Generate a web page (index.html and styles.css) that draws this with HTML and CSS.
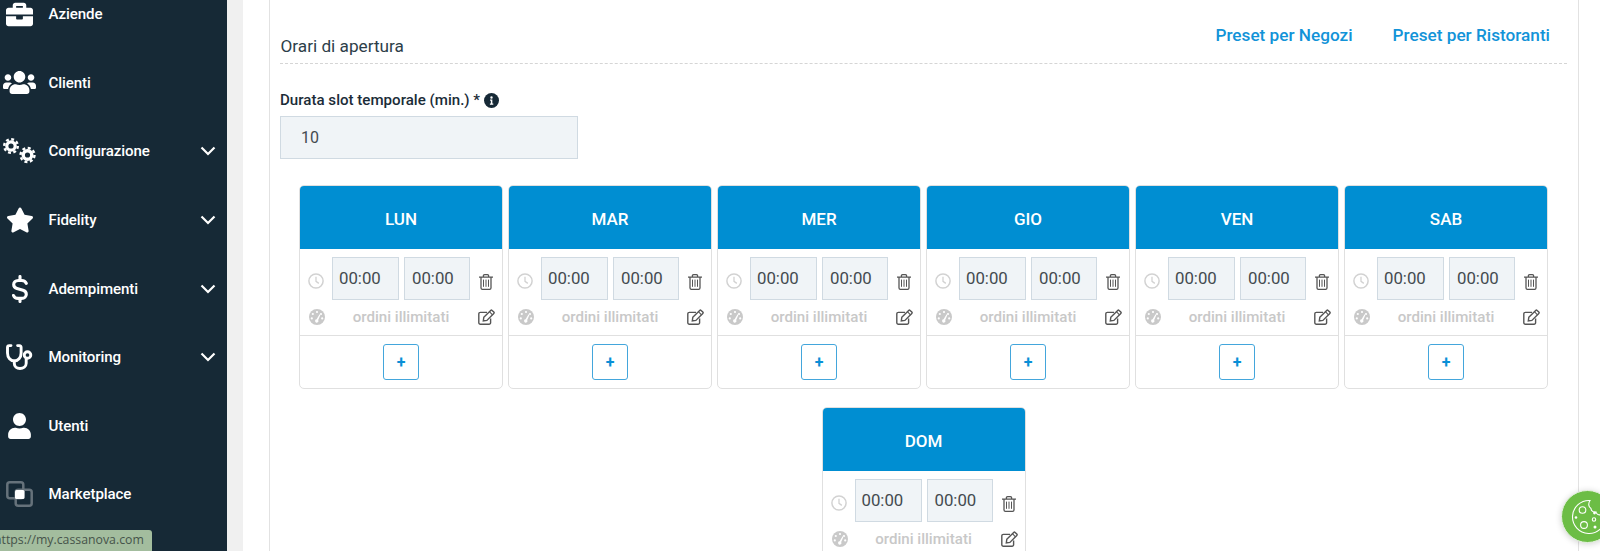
FILE: index.html
```html
<!DOCTYPE html>
<html lang="it">
<head>
<meta charset="utf-8">
<title>Orari di apertura</title>
<link rel="stylesheet" href="styles.css">
</head>
<body>
<svg class="defs" width="0" height="0" aria-hidden="true">
  <defs>
    <symbol id="i-clock" viewBox="0 0 16 16"><circle cx="8" cy="8" r="7.100" fill="none" stroke="currentColor" stroke-width="1.500"/><path d="M8 3.800V8.400l2.800 2" fill="none" stroke="currentColor" stroke-width="1.300"/></symbol>
    <symbol id="i-gauge" viewBox="0 0 16 16"><circle cx="8" cy="8" r="8" fill="currentColor"/><g fill="#fff"><circle cx="8" cy="3" r="1.100"/><circle cx="3.800" cy="5" r="1.100"/><circle cx="2.800" cy="9.400" r="1.100"/><circle cx="13.200" cy="9.400" r="1.100"/><circle cx="12" cy="5" r="1.100"/><path d="M10.600 5.200l.9.500-2.300 5.300a1.700 1.700 0 1 1-1.600-.8z"/></g></symbol>
    <symbol id="i-trash" viewBox="0 0 14 16"><g fill="none" stroke="currentColor" stroke-width="1.300"><path d="M0 3.200h14M2 3.200V14a1.400 1.400 0 0 0 1.400 1.300h7.200A1.400 1.400 0 0 0 12 14V3.200"/><path d="M4.400 3V1.800Q4.400.7 5.500.7h3Q9.600.7 9.600 1.800V3"/></g><path d="M4.500 5.600v7.200M7 5.600v7.200M9.500 5.600v7.200" stroke="currentColor" stroke-width="1"/></symbol>
    <symbol id="i-edit" viewBox="0 0 17 16"><g fill="none" stroke="currentColor" stroke-width="1.400"><path d="M12.600 9.600v4a1.600 1.600 0 0 1-1.600 1.700H2.400A1.600 1.600 0 0 1 .8 13.600V5a1.600 1.600 0 0 1 1.600-1.600H9"/><path d="M5.800 8.300 12.700 1.400a1 1 0 0 1 1.400 0l1.700 1.700a1 1 0 0 1 0 1.400L8.900 11.400l-3.600.5z"/><path d="M11.400 2.700l3.100 3.100" stroke-width="1.100"/></g></symbol>
    <symbol id="i-chevron" viewBox="0 0 16 10"><path d="M1.500 1.500 8 8l6.500-6.500" fill="none" stroke="currentColor" stroke-width="2.200"/></symbol>
  </defs>
</svg>

<aside class="sidebar">
  <nav class="nav">
    <a class="nav-item"><span class="nav-icon"><svg width="27" height="27" viewBox="0 0 512 512"><path fill="currentColor" d="M320 336c0 8.840-7.160 16-16 16h-96c-8.840 0-16-7.160-16-16v-48H0v144c0 25.600 22.400 48 48 48h416c25.600 0 48-22.400 48-48V288H320v48zm144-208h-80V80c0-25.600-22.400-48-48-48H176c-25.600 0-48 22.400-48 48v48H48c-25.600 0-48 22.400-48 48v80h512v-80c0-25.600-22.400-48-48-48zm-144 0H192V96h128v32z"/></svg></span><span class="nav-label">Aziende</span></a>
    <a class="nav-item"><span class="nav-icon"><svg width="33" height="27" viewBox="0 0 640 512"><path fill="currentColor" d="M96 224c35.300 0 64-28.700 64-64s-28.700-64-64-64-64 28.700-64 64 28.700 64 64 64zm448 0c35.300 0 64-28.700 64-64s-28.700-64-64-64-64 28.700-64 64 28.700 64 64 64zm32 32h-64c-17.600 0-33.500 7.100-45.100 18.600 40.300 22.100 68.900 62 75.100 109.400h66c17.700 0 32-14.300 32-32v-32c0-35.300-28.700-64-64-64zm-256 0c61.900 0 112-50.100 112-112S381.900 32 320 32 208 82.100 208 144s50.100 112 112 112zm76.800 32h-8.300c-20.800 10-43.900 16-68.500 16s-47.600-6-68.500-16h-8.300C179.600 288 128 339.600 128 403.200V432c0 26.500 21.500 48 48 48h288c26.500 0 48-21.500 48-48v-28.800c0-63.600-51.600-115.200-115.200-115.200zm-223.700-13.400C161.500 263.100 145.600 256 128 256H64c-35.300 0-64 28.700-64 64v32c0 17.700 14.300 32 32 32h65.900c6.300-47.400 34.900-87.300 75.200-109.400z"/></svg></span><span class="nav-label">Clienti</span></a>
    <a class="nav-item"><span class="nav-icon"><svg width="33" height="26" viewBox="0 0 33 26"><g fill="none" stroke="currentColor"><circle cx="8" cy="8" r="6.800" stroke-width="2.400" stroke-dasharray="2.900 2.440"/><circle cx="8" cy="8" r="4.200" stroke-width="3.200"/><circle cx="24.500" cy="17" r="7" stroke-width="2.400" stroke-dasharray="3 2.500"/><circle cx="24.500" cy="17" r="4.300" stroke-width="3.400"/></g></svg></span><span class="nav-label">Configurazione</span><svg class="nav-chevron"><use href="#i-chevron"/></svg></a>
    <a class="nav-item"><span class="nav-icon"><svg width="28" height="26" viewBox="0 0 576 512"><path fill="currentColor" d="M259.300 17.800L194 150.200 47.900 171.500c-26.200 3.800-36.700 36.100-17.700 54.600l105.700 103-25 145.500c-4.500 26.300 23.200 46 46.400 33.700L288 439.600l130.700 68.700c23.200 12.200 50.900-7.400 46.400-33.700l-25-145.500 105.700-103c19-18.500 8.500-50.800-17.700-54.600L382 150.200 316.700 17.800c-11.700-23.600-45.600-23.900-57.400 0z"/></svg></span><span class="nav-label">Fidelity</span><svg class="nav-chevron"><use href="#i-chevron"/></svg></a>
    <a class="nav-item"><span class="nav-icon"><svg width="16" height="28" viewBox="0 0 16 28"><path d="M14.300 8.400C13.600 6.600 12 5.500 9.800 5.500H6.200C3.500 5.500 1.700 7.300 1.700 9.600c0 2 1.300 3.400 3.300 4l6 1.700c2 .6 3.300 2 3.300 4 0 2.300-1.800 4.100-4.500 4.100H6C3.800 23.400 2.200 22.300 1.500 20.500M8 1.500v4M8 23.400v3.100" fill="none" stroke="currentColor" stroke-width="3.100" stroke-linecap="round"/></svg></span><span class="nav-label">Adempimenti</span><svg class="nav-chevron"><use href="#i-chevron"/></svg></a>
    <a class="nav-item"><span class="nav-icon"><svg width="28" height="26" viewBox="0 0 28 26"><g fill="none" stroke="currentColor" stroke-width="2.900" stroke-linecap="round"><path d="M5 1.600H3.200C2 1.600 1.500 2.300 1.500 3.500V9c0 4.600 3.100 7.900 6.800 7.900s6.800-3.300 6.800-7.900V3.500c0-1.200-.5-1.900-1.700-1.900h-1.800"/><path d="M8.300 17v2.500c0 3.300 2.500 5 5.700 5s6.200-2 6.200-5.200v-4.300"/><circle cx="21.500" cy="11" r="3.300"/></g></svg></span><span class="nav-label">Monitoring</span><svg class="nav-chevron"><use href="#i-chevron"/></svg></a>
    <a class="nav-item"><span class="nav-icon"><svg width="23" height="26" viewBox="0 0 448 512"><path fill="currentColor" d="M224 256c70.700 0 128-57.300 128-128S294.700 0 224 0 96 57.300 96 128s57.300 128 128 128zm89.600 32h-16.700c-22.200 10.200-46.900 16-72.900 16s-50.600-5.800-72.900-16h-16.700C60.200 288 0 348.200 0 422.400V464c0 26.500 21.500 48 48 48h352c26.500 0 48-21.500 48-48v-41.600c0-74.200-60.200-134.400-134.400-134.400z"/></svg></span><span class="nav-label">Utenti</span></a>
    <a class="nav-item"><span class="nav-icon"><svg width="27" height="26" viewBox="0 0 27 26"><g fill="none" stroke="#66727b" stroke-width="2.500"><rect x="1.300" y="1.300" width="16" height="16" rx="2.500"/><rect x="9.700" y="8.700" width="16" height="16" rx="2.500"/></g><rect x="9" y="9" width="9.500" height="9" rx="1.500" fill="#fff"/></svg></span><span class="nav-label">Marketplace</span></a>
  </nav>
</aside>

<main class="main">
  <div class="page">
    <section class="panel">
      <header class="section-head">
        <h2 class="section-title">Orari di apertura</h2>
        <div class="presets">
          <a class="preset">Preset per Negozi</a>
          <a class="preset">Preset per Ristoranti</a>
        </div>
      </header>

      <div class="field">
        <div class="field-label">Durata slot temporale (min.) *
          <svg class="info" viewBox="0 0 16 16"><circle cx="8" cy="8" r="8" fill="#162936"/><path d="M6.500 7h2.400v4.200h1V12.500H6.300v-1.300h1V8.200h-.8zM8 3.400a1.300 1.300 0 1 1 0 2.600 1.300 1.300 0 0 1 0-2.600z" fill="#fff"/></svg>
        </div>
        <div class="input slot-input">10</div>
      </div>

      <div class="days">
        <article class="day">
          <h3 class="day-head">LUN</h3>
          <div class="day-body">
            <div class="slot-row"><svg class="ico-left"><use href="#i-clock"/></svg><div class="input time">00:00</div><div class="input time">00:00</div><svg class="ico-trash"><use href="#i-trash"/></svg></div>
            <div class="limit-row"><svg class="ico-left gauge"><use href="#i-gauge"/></svg><span class="limit">ordini illimitati</span><svg class="ico-edit"><use href="#i-edit"/></svg></div>
          </div>
          <div class="day-foot"><button class="add">+</button></div>
        </article>
        <article class="day">
          <h3 class="day-head">MAR</h3>
          <div class="day-body">
            <div class="slot-row"><svg class="ico-left"><use href="#i-clock"/></svg><div class="input time">00:00</div><div class="input time">00:00</div><svg class="ico-trash"><use href="#i-trash"/></svg></div>
            <div class="limit-row"><svg class="ico-left gauge"><use href="#i-gauge"/></svg><span class="limit">ordini illimitati</span><svg class="ico-edit"><use href="#i-edit"/></svg></div>
          </div>
          <div class="day-foot"><button class="add">+</button></div>
        </article>
        <article class="day">
          <h3 class="day-head">MER</h3>
          <div class="day-body">
            <div class="slot-row"><svg class="ico-left"><use href="#i-clock"/></svg><div class="input time">00:00</div><div class="input time">00:00</div><svg class="ico-trash"><use href="#i-trash"/></svg></div>
            <div class="limit-row"><svg class="ico-left gauge"><use href="#i-gauge"/></svg><span class="limit">ordini illimitati</span><svg class="ico-edit"><use href="#i-edit"/></svg></div>
          </div>
          <div class="day-foot"><button class="add">+</button></div>
        </article>
        <article class="day">
          <h3 class="day-head">GIO</h3>
          <div class="day-body">
            <div class="slot-row"><svg class="ico-left"><use href="#i-clock"/></svg><div class="input time">00:00</div><div class="input time">00:00</div><svg class="ico-trash"><use href="#i-trash"/></svg></div>
            <div class="limit-row"><svg class="ico-left gauge"><use href="#i-gauge"/></svg><span class="limit">ordini illimitati</span><svg class="ico-edit"><use href="#i-edit"/></svg></div>
          </div>
          <div class="day-foot"><button class="add">+</button></div>
        </article>
        <article class="day">
          <h3 class="day-head">VEN</h3>
          <div class="day-body">
            <div class="slot-row"><svg class="ico-left"><use href="#i-clock"/></svg><div class="input time">00:00</div><div class="input time">00:00</div><svg class="ico-trash"><use href="#i-trash"/></svg></div>
            <div class="limit-row"><svg class="ico-left gauge"><use href="#i-gauge"/></svg><span class="limit">ordini illimitati</span><svg class="ico-edit"><use href="#i-edit"/></svg></div>
          </div>
          <div class="day-foot"><button class="add">+</button></div>
        </article>
        <article class="day">
          <h3 class="day-head">SAB</h3>
          <div class="day-body">
            <div class="slot-row"><svg class="ico-left"><use href="#i-clock"/></svg><div class="input time">00:00</div><div class="input time">00:00</div><svg class="ico-trash"><use href="#i-trash"/></svg></div>
            <div class="limit-row"><svg class="ico-left gauge"><use href="#i-gauge"/></svg><span class="limit">ordini illimitati</span><svg class="ico-edit"><use href="#i-edit"/></svg></div>
          </div>
          <div class="day-foot"><button class="add">+</button></div>
        </article>
        <article class="day">
          <h3 class="day-head">DOM</h3>
          <div class="day-body">
            <div class="slot-row"><svg class="ico-left"><use href="#i-clock"/></svg><div class="input time">00:00</div><div class="input time">00:00</div><svg class="ico-trash"><use href="#i-trash"/></svg></div>
            <div class="limit-row"><svg class="ico-left gauge"><use href="#i-gauge"/></svg><span class="limit">ordini illimitati</span><svg class="ico-edit"><use href="#i-edit"/></svg></div>
          </div>
          <div class="day-foot"><button class="add">+</button></div>
        </article>
      </div>
    </section>
  </div>
</main>

<div class="status-tip">https://my.cassanova.com</div>

<button class="cookie" aria-label="Cookie">
  <svg width="40" height="40" viewBox="0 0 40 40"><g fill="none" stroke="#fff" stroke-width="1.100"><path d="M22 3.500a16.500 16.500 0 1 0 15.500 17c-2.500.5-4-1-4.500-3-2 1-4.500 0-5-2.500-2.500.5-5-1-5-3.500-2.500-1.500-3-5-1-8z"/><circle cx="14.500" cy="13" r="3.300"/><circle cx="16" cy="28" r="3.400"/><circle cx="26" cy="22.500" r="1.700"/></g><g fill="#fff"><circle cx="26.500" cy="16" r="1.400"/><circle cx="8" cy="20.500" r="1.300"/><circle cx="27" cy="30" r="1.500"/></g></svg>
</button>
</body>
</html>
```

FILE: styles.css
```css
* { box-sizing: border-box; }

html, body {
  margin: 0;
  height: 551px;
  overflow: hidden;
}

body {
  display: flex;
  position: relative;
  font-family: Roboto, "Liberation Sans", sans-serif;
  color: #25353f;
  background: #fff;
}

.defs { position: absolute; }

/* Sidebar */
.sidebar {
  flex: 0 0 227px;
  background: #162936;
  color: #fff;
}

.nav {
  margin-top: -20px;
  display: flex;
  flex-direction: column;
}

.nav-item {
  display: flex;
  align-items: center;
  height: 68.600px;
}

.nav-icon {
  flex: 0 0 48.500px;
  display: flex;
  justify-content: center;
  padding-right: 9px;
}

.nav-label {
  flex: 1;
  font-size: 15.100px;
  font-weight: 500;
  letter-spacing: -0.1px;
}

.nav-chevron {
  width: 16px;
  height: 10px;
  margin-right: 11.500px;
}

/* Main */
.main {
  flex: 1;
  background: #f0f0f0;
  padding-left: 16px;
  min-width: 0;
}

.page {
  background: #fff;
  height: 100%;
  padding: 0 21px 0 26px;
}

.panel {
  height: 100%;
  border-left: 1px solid #e2e2e2;
  border-right: 1px solid #e2e2e2;
  padding: 0 11px 0 10px;
}

.section-head {
  height: 64px;
  display: flex;
  justify-content: space-between;
  border-bottom: 1px dashed #d5d5d5;
}

.section-title {
  margin: 36px 0 0 0.500px;
  font-size: 17.200px;
  font-weight: 400;
  line-height: 20px;
  color: #2d3e49;
}

.presets {
  display: flex;
  gap: 40px;
  padding: 25px 17px 0 0;
}

.preset {
  font-size: 17.200px;
  font-weight: 500;
  line-height: 20px;
  color: #1293d8;
}

.field { margin-top: 27px; }

.field-label {
  display: flex;
  align-items: center;
  gap: 4px;
  height: 18px;
  margin-bottom: 7px;
  font-size: 15.100px;
  font-weight: 500;
  color: #1b2c38;
}

.info { width: 15px; height: 15px; }

.input {
  background: #f0f4f7;
  border: 1px solid #d0dae2;
  color: #444b50;
  font-size: 16.800px;
  height: 43px;
  display: flex;
  align-items: center;
}

.slot-input {
  width: 298px;
  padding-left: 20px;
  font-size: 16px;
}

/* Days */
.days {
  margin-top: 26px;
  display: flex;
  flex-wrap: wrap;
  justify-content: center;
  row-gap: 18px;
}

.day {
  width: 204px;
  margin: 0 2.500px;
  border: 1px solid #e0e0e0;
  border-radius: 5px;
  background: #fff;
  overflow: hidden;
}

.day-head {
  margin: -1px -1px 0;
  height: 64px;
  padding-top: 3px;
  background: #008ed2;
  color: #fff;
  font-size: 17px;
  font-weight: 500;
  display: flex;
  align-items: center;
  justify-content: center;
}

.day-body {
  padding: 8px 0 0;
  height: 86px;
}

.slot-row {
  display: flex;
  padding-left: 8px;
}

.time {
  width: 67px;
  padding-left: 6px;
  margin-right: 5px;
  padding-bottom: 2px;
}

.time + .time { margin-right: 0; width: 66px; padding-left: 7px; }

.ico-left {
  flex: none;
  width: 16px;
  height: 16px;
  margin: 16px 8px 0 0;
  color: #d2d2d2;
}

.gauge {
  margin: 0 7px 0 1px;
  color: #c9c9c9;
}

.ico-trash {
  flex: none;
  width: 14px;
  height: 16px;
  margin: 17px 0 0 9px;
  color: #555;
}

.limit-row {
  display: flex;
  align-items: center;
  height: 24px;
  margin-top: 5px;
  padding-left: 8px;
}

.limit {
  flex: 1;
  text-align: center;
  font-size: 15.100px;
  font-weight: 500;
  color: #c8c8c8;
  padding-right: 8px;
}

.ico-edit {
  flex: none;
  width: 17px;
  height: 16px;
  margin: 0 7px 0 0;
  color: #555;
}

.day-foot {
  border-top: 1px solid #e0e0e0;
  padding: 8px 0;
  display: flex;
  justify-content: center;
}

.add {
  width: 36px;
  height: 36px;
  padding: 0;
  background: #fff;
  border: 1px solid #43a6dc;
  border-radius: 3px;
  color: #0a8fd6;
  font-family: inherit;
  font-size: 16px;
  font-weight: 700;
}

/* Overlays */
.status-tip {
  position: absolute;
  left: 0;
  bottom: 0;
  width: 152px;
  height: 21px;
  background: #a3bd9e;
  border-radius: 0 3px 0 0;
  color: #46544a;
  font-family: "Open Sans", sans-serif;
  font-size: 12.300px;
  line-height: 20px;
  white-space: nowrap;
  overflow: hidden;
  text-indent: -6px;
}

.cookie {
  position: absolute;
  left: 1561px;
  top: 490px;
  width: 53px;
  height: 53px;
  padding: 0;
  border: 1px solid #e6f2e0;
  border-radius: 50%;
  background: #6cbd45;
  box-shadow: 0 1px 6px rgba(0, 0, 0, 0.18);
  display: flex;
  align-items: center;
  justify-content: center;
}
```
